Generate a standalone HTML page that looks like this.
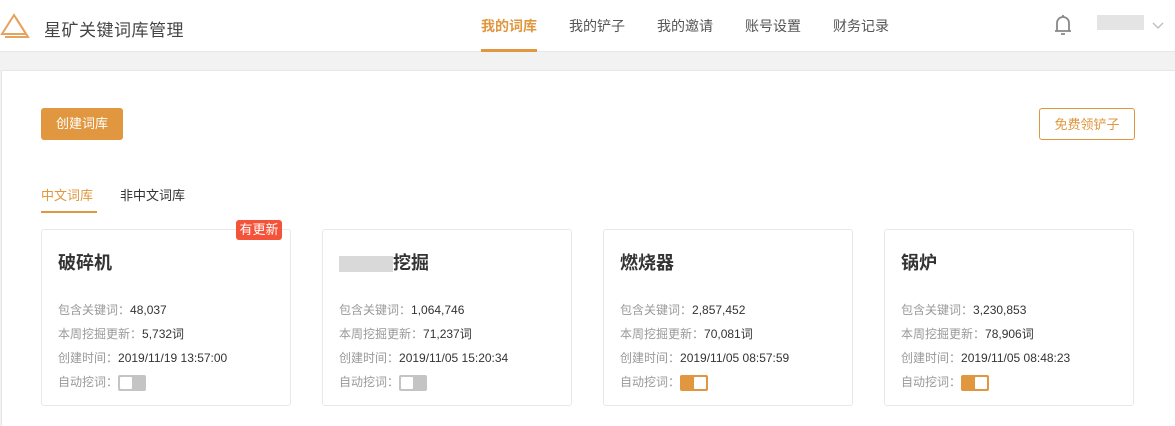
<!DOCTYPE html>
<html><head><meta charset="utf-8"><style>
*{margin:0;padding:0;box-sizing:border-box}
body{width:1175px;height:426px;overflow:hidden;background:#f2f2f2;font-family:"Liberation Sans","Noto Sans CJK SC",sans-serif;position:relative}
.hd{position:absolute;left:0;top:0;width:1175px;height:52px;background:#fff;border-bottom:1px solid #e8e8e8}
.abs{position:absolute}
.nav{position:absolute;top:16px;font-size:14px;color:#555}
.main{position:absolute;left:1px;top:70px;width:1174px;height:356px;background:#fff;border-left:1px solid #e6e6e6;border-top:1px solid #e6e6e6}
.btn{position:absolute;top:108px;height:32px;border-radius:3px;font-size:13px;line-height:32px;text-align:center}
.card{position:absolute;top:229px;width:250px;height:177px;border:1px solid #e8e8e8;border-radius:3px;background:#fff}
.card h3{position:absolute;left:16px;top:19px;font-size:18px;font-weight:bold;color:#333}
.row{position:absolute;left:16px;font-size:12px;color:#333;white-space:nowrap}
.row span{color:#999}
.sw{display:inline-block;vertical-align:middle;width:28px;height:16px;border-radius:2px;background:#c4c4c4;position:relative;margin-left:0}
.sw i{position:absolute;left:2px;top:2px;width:12px;height:12px;background:#fff;border-radius:1px}
.sw.on{background:#e0973f}.sw.on i{left:14px}
</style></head><body>
<div class="hd">
<svg class="abs" style="left:0;top:12px" width="30" height="26" viewBox="0 0 30 26"><g fill="none" stroke="#e5a35d" stroke-width="2"><path d="M14 3 L26 22 H2 Z"/><path d="M16 6 L28 25 H5"/></g></svg>
<div class="abs" style="left:44px;top:16px;font-size:17px;color:#444;letter-spacing:0.5px">星矿关键词库管理</div>
<div class="nav" style="left:481px;color:#e0973f;font-weight:bold">我的词库</div>
<div class="abs" style="left:481px;top:49px;width:56px;height:3px;background:#e0973f"></div>
<div class="nav" style="left:569px">我的铲子</div>
<div class="nav" style="left:657px">我的邀请</div>
<div class="nav" style="left:745px">账号设置</div>
<div class="nav" style="left:833px">财务记录</div>
<svg class="abs" style="left:1053px;top:12px" width="20" height="26" viewBox="0 0 20 26"><path d="M4 19 V11 a6 6 0 0 1 12 0 V19 H2 H18 M10 3 V5 M8 22 h4" fill="none" stroke="#888" stroke-width="1.8"/></svg>
<div class="abs" style="left:1097px;top:15px;width:47px;height:15px;background:#e4e4e4"></div>
<svg class="abs" style="left:1152px;top:22px" width="12" height="8"><path d="M1 1 L6 6 L11 1" fill="none" stroke="#bbb" stroke-width="1.3"/></svg>
</div>
<div class="main"></div>
<div class="btn" style="left:41px;width:82px;background:#e0973f;color:#fff">创建词库</div>
<div class="btn" style="left:1039px;width:96px;border:1px solid #e0973f;color:#e0973f;background:#fff">免费领铲子</div>
<div class="abs" style="left:41px;top:185px;font-size:13px;color:#e0973f">中文词库</div>
<div class="abs" style="left:41px;top:211px;width:56px;height:2px;background:#e0973f"></div>
<div class="abs" style="left:120px;top:185px;font-size:13px;color:#333">非中文词库</div>

<div class="card" style="left:41px"><h3>破碎机</h3>
<div class="row" style="top:71px"><span>包含关键词：</span>48,037</div>
<div class="row" style="top:95px"><span>本周挖掘更新：</span>5,732词</div>
<div class="row" style="top:119px"><span>创建时间：</span>2019/11/19 13:57:00</div>
<div class="row" style="top:143px"><span>自动挖词：</span><b class="sw"><i></i></b></div></div>
<div class="abs" style="left:236px;top:220px;width:46px;height:20px;background:#f5523a;color:#fff;font-size:13px;line-height:20px;text-align:center;border-radius:3px">有更新</div>

<div class="card" style="left:322px"><h3><b style="display:inline-block;width:54px;height:16px;background:#d9d9d9;vertical-align:middle"></b>挖掘</h3>
<div class="row" style="top:71px"><span>包含关键词：</span>1,064,746</div>
<div class="row" style="top:95px"><span>本周挖掘更新：</span>71,237词</div>
<div class="row" style="top:119px"><span>创建时间：</span>2019/11/05 15:20:34</div>
<div class="row" style="top:143px"><span>自动挖词：</span><b class="sw"><i></i></b></div></div>

<div class="card" style="left:603px"><h3>燃烧器</h3>
<div class="row" style="top:71px"><span>包含关键词：</span>2,857,452</div>
<div class="row" style="top:95px"><span>本周挖掘更新：</span>70,081词</div>
<div class="row" style="top:119px"><span>创建时间：</span>2019/11/05 08:57:59</div>
<div class="row" style="top:143px"><span>自动挖词：</span><b class="sw on"><i></i></b></div></div>

<div class="card" style="left:884px"><h3>锅炉</h3>
<div class="row" style="top:71px"><span>包含关键词：</span>3,230,853</div>
<div class="row" style="top:95px"><span>本周挖掘更新：</span>78,906词</div>
<div class="row" style="top:119px"><span>创建时间：</span>2019/11/05 08:48:23</div>
<div class="row" style="top:143px"><span>自动挖词：</span><b class="sw on"><i></i></b></div></div>
</body></html>
